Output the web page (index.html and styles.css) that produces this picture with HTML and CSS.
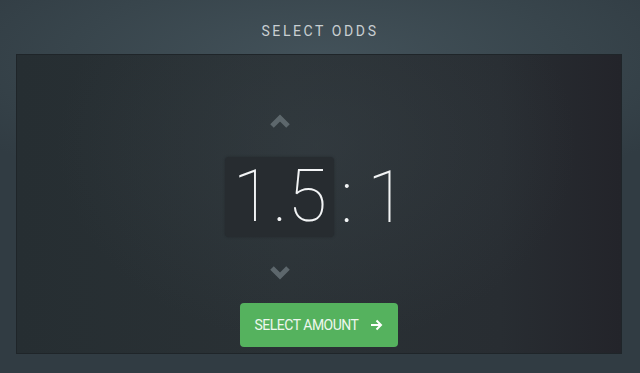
FILE: index.html
```html
<!DOCTYPE html>
<html lang="en">
<head>
  <meta charset="UTF-8">
  <meta name="viewport" content="width=device-width, initial-scale=1.0">
  <title>Select Odds</title>
  <link rel="stylesheet" href="styles.css">
</head>
<body>

<header class="title-bar">
  <h1>SELECT ODDS</h1>
</header>

<section class="panel">
  <div class="odds">
    <div class="odds-picker">
      <button class="chevron" aria-label="Increase">
        <svg width="20" height="16" viewBox="0 0 20 16"><polyline points="2,13 10,5 18,13" /></svg>
      </button>
      <div class="odds-box">1.5</div>
      <button class="chevron" aria-label="Decrease">
        <svg width="20" height="16" viewBox="0 0 20 16"><polyline points="2,3 10,11 18,3" /></svg>
      </button>
    </div>
    <div class="odds-rest">
      <span class="colon">:</span>
      <span class="against">1</span>
    </div>
  </div>

  <button class="primary">
    SELECT AMOUNT
    <svg class="arrow" width="13" height="12" viewBox="0 0 13 12"><path d="M1 6 H11 M6.5 1.5 L11 6 L6.5 10.5" /></svg>
  </button>
</section>

</body>
</html>
```

FILE: styles.css
```css
body {
  margin: 0;
  height: 373px;
  overflow: hidden;
  font-family: Roboto, "Liberation Sans", sans-serif;
  background: radial-gradient(ellipse 420px 140px at 320px 60px, #43525a 0%, #38454c 60%, #313c43 100%);
  background-color: #333f46;
}
.title-bar {
  height: 54px;
  display: flex;
  align-items: center;
  justify-content: center;
}
.title-bar h1 {
  margin: 0;
  padding-top: 8px;
  font-size: 14px;
  font-weight: 400;
  letter-spacing: 2.6px;
  color: #c9cfd2;
}
.panel {
  margin: 0 18px 0 16px;
  height: 298px;
  border: 1px solid #1f2529;
  background:
    radial-gradient(ellipse 260px 200px at 300px 90px, rgba(60, 70, 76, 0.4), rgba(60, 70, 76, 0) 100%),
    linear-gradient(90deg, #262e32 0%, #2a3135 45%, #282d32 80%, #23242a 100%);
  display: flex;
  flex-direction: column;
  align-items: center;
}
.odds {
  display: flex;
  align-items: center;
  margin-top: 58px;
  margin-left: -6px;
}
.odds-picker {
  display: flex;
  flex-direction: column;
  align-items: center;
}
.chevron {
  background: none;
  border: none;
  padding: 0;
  height: 16px;
  cursor: pointer;
}
.chevron svg {
  display: block;
}
.chevron polyline {
  fill: none;
  stroke: #5d676c;
  stroke-width: 5;
}
.odds-box {
  width: 109px;
  height: 80px;
  margin: 28px 0 28px;
  border-radius: 4px;
  background: #272c30;
  box-shadow: 0 0 3px rgba(0, 0, 0, 0.25);
  color: #f2f4f5;
  font-size: 72px;
  font-weight: 100;
  line-height: 80px;
  text-align: center;
}
.odds-rest {
  color: #f2f4f5;
  font-size: 72px;
  font-weight: 100;
  display: flex;
  align-items: center;
}
.colon {
  margin-left: 6px;
}
.against {
  margin-left: 14px;
}
.primary {
  margin-top: 22px;
  width: 158px;
  height: 44px;
  border: none;
  border-radius: 4px;
  background-color: #55b25e;
  color: #eef7ef;
  font-family: Roboto, "Liberation Sans", sans-serif;
  font-size: 14px;
  letter-spacing: -0.5px;
  display: flex;
  align-items: center;
  justify-content: center;
  cursor: pointer;
}
.arrow {
  margin-left: 12px;
}
.arrow path {
  fill: none;
  stroke: white;
  stroke-width: 2;
}
```
